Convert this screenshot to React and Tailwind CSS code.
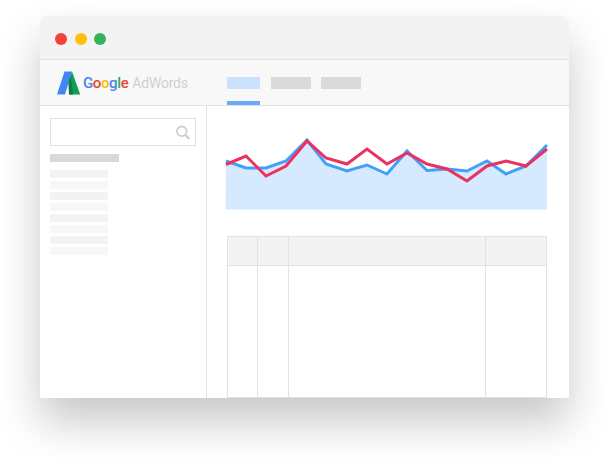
const blue = [[226,161],[246,168],[266,168],[286,161],[307,140],[326,164],[347,171],[367,165],[387,174],[407,151],[427,170.5],[447,169],[467,171],[487,161],[506,174],[526,166],[547,145]];
const red = [[226,164.5],[246,156],[266,176],[286,166],[307,141],[326,158],[347,164],[367,149],[387,164],[407,153],[427,164],[447,169],[467,181],[487,166],[506,161],[526,166],[547,149]];
const OX = 225, OY = 130;
const pts = (a) => a.map(([x, y]) => `${x - OX},${y - OY}`).join(" ");

function AdWordsMark() {
  return (
    <svg width="24" height="24" viewBox="0 0 24 24" className="shrink-0">
      <path d="M7.5 0.5H15L8 23.5H0Z" fill="#4285f4" />
      <path d="M15 0.5L23.2 23.5H12L11.6 11Z" fill="#0f9d58" />
      <path d="M13.5 5L16 23.5H12L11.6 11Z" fill="#0b7a45" />
    </svg>
  );
}

function SearchGlyph() {
  return (
    <svg width="15" height="15" viewBox="0 0 15 15" fill="none" stroke="#cdcdcd">
      <circle cx="6.8" cy="6.3" r="4.8" strokeWidth="1.8" />
      <path d="M10.4 10L14.3 13.8" strokeWidth="2.4" />
    </svg>
  );
}

export default function App() {
  return (
    <div className="w-[609px] h-[458px] bg-white overflow-hidden pl-[40px] pt-[16px]">
      <div className="w-[529px] h-[382px] bg-white rounded-t-[6px] shadow-[0_24px_44px_rgba(0,0,0,0.22)] flex flex-col">
        <div className="h-[44px] shrink-0 bg-[#f3f3f3] rounded-t-[6px] border-b border-[#e2e2e2] flex items-center pl-[15px] pt-[2px] gap-[7.5px]">
          <div className="w-[12px] h-[12px] rounded-full bg-[#f44336]" />
          <div className="w-[12px] h-[12px] rounded-full bg-[#ffc107]" />
          <div className="w-[12px] h-[12px] rounded-full bg-[#34b35a]" />
        </div>
        <div className="h-[46px] shrink-0 bg-[#f8f8f8] border-b border-[#e2e2e2] flex">
          <div className="w-[187px] shrink-0 flex items-center pl-[17px] gap-[2px]">
            <AdWordsMark />
            <div className="flex gap-[4px] items-baseline text-[15px] leading-[20px] font-['Roboto',sans-serif]">
              <span className="font-medium tracking-[-0.4px]">
                <span className="text-[#4285f4]">G</span>
                <span className="text-[#ea4335]">o</span>
                <span className="text-[#fbbc05]">o</span>
                <span className="text-[#4285f4]">g</span>
                <span className="text-[#34a853]">l</span>
                <span className="text-[#ea4335]">e</span>
              </span>
              <span className="text-[#d0d0d0] text-[14px] tracking-[-0.2px]">AdWords</span>
            </div>
          </div>
          <div className="flex gap-[10px]">
            <div className="w-[33px] flex flex-col justify-between pt-[17px] mr-[1px]">
              <div className="h-[12px] bg-[#cce1ff]" />
              <div className="h-[4px] bg-[#6aa9ff]" />
            </div>
            <div className="w-[40px] pt-[17px]"><div className="h-[12px] bg-[#dadada]" /></div>
            <div className="w-[40px] pt-[17px]"><div className="h-[12px] bg-[#dadada]" /></div>
          </div>
        </div>
        <div className="flex-1 flex min-h-0">
          <div className="w-[167px] shrink-0 border-r border-[#e2e2e2] pl-[10px] pr-[10px] pt-[12px]">
            <div className="h-[28px] border border-[#e2e2e2] flex items-center justify-end pr-[5px]">
              <SearchGlyph />
            </div>
            <div className="w-[69px] h-[8px] bg-[#d9d9d9] mt-[8px]" />
            <div className="flex flex-col gap-[3px] mt-[8px] w-[58px]">
              {[0, 1, 2, 3, 4, 5, 6, 7].map((i) => (
                <div key={i} className={`h-[8px] ${i % 2 === 0 ? "bg-[#f3f3f3]" : "bg-[#f7f7f7]"}`} />
              ))}
            </div>
          </div>
          <div className="flex-1 flex flex-col pl-[18px] pr-[22px]">
            <svg width="324" height="80" viewBox="0 0 324 80" className="block mt-[24px] shrink-0">
              <polygon points={`${pts(blue)} 322,79.5 0.5,79.5`} fill="#d6eaff" />
              <polyline points={pts(blue)} fill="none" stroke="#42a0fb" strokeWidth="3" />
              <polyline points={pts(red)} fill="none" stroke="#ea3160" strokeWidth="3" />
            </svg>
            <div className="ml-[2px] mt-[26px] w-[320px] flex-1 min-h-0 flex flex-col border-l border-r border-t border-b border-[#e2e2e2]">
              <div className="h-[29px] shrink-0 flex bg-[#f3f3f3] border-b border-[#e2e2e2]">
                <div className="w-[30px] border-r border-[#e2e2e2]" />
                <div className="w-[31px] border-r border-[#e2e2e2]" />
                <div className="w-[197px] border-r border-[#e2e2e2]" />
                <div className="flex-1" />
              </div>
              <div className="flex-1 flex">
                <div className="w-[30px] border-r border-[#e2e2e2]" />
                <div className="w-[31px] border-r border-[#e2e2e2]" />
                <div className="w-[197px] border-r border-[#e2e2e2]" />
                <div className="flex-1" />
              </div>
            </div>
          </div>
        </div>
      </div>
    </div>
  );
}
